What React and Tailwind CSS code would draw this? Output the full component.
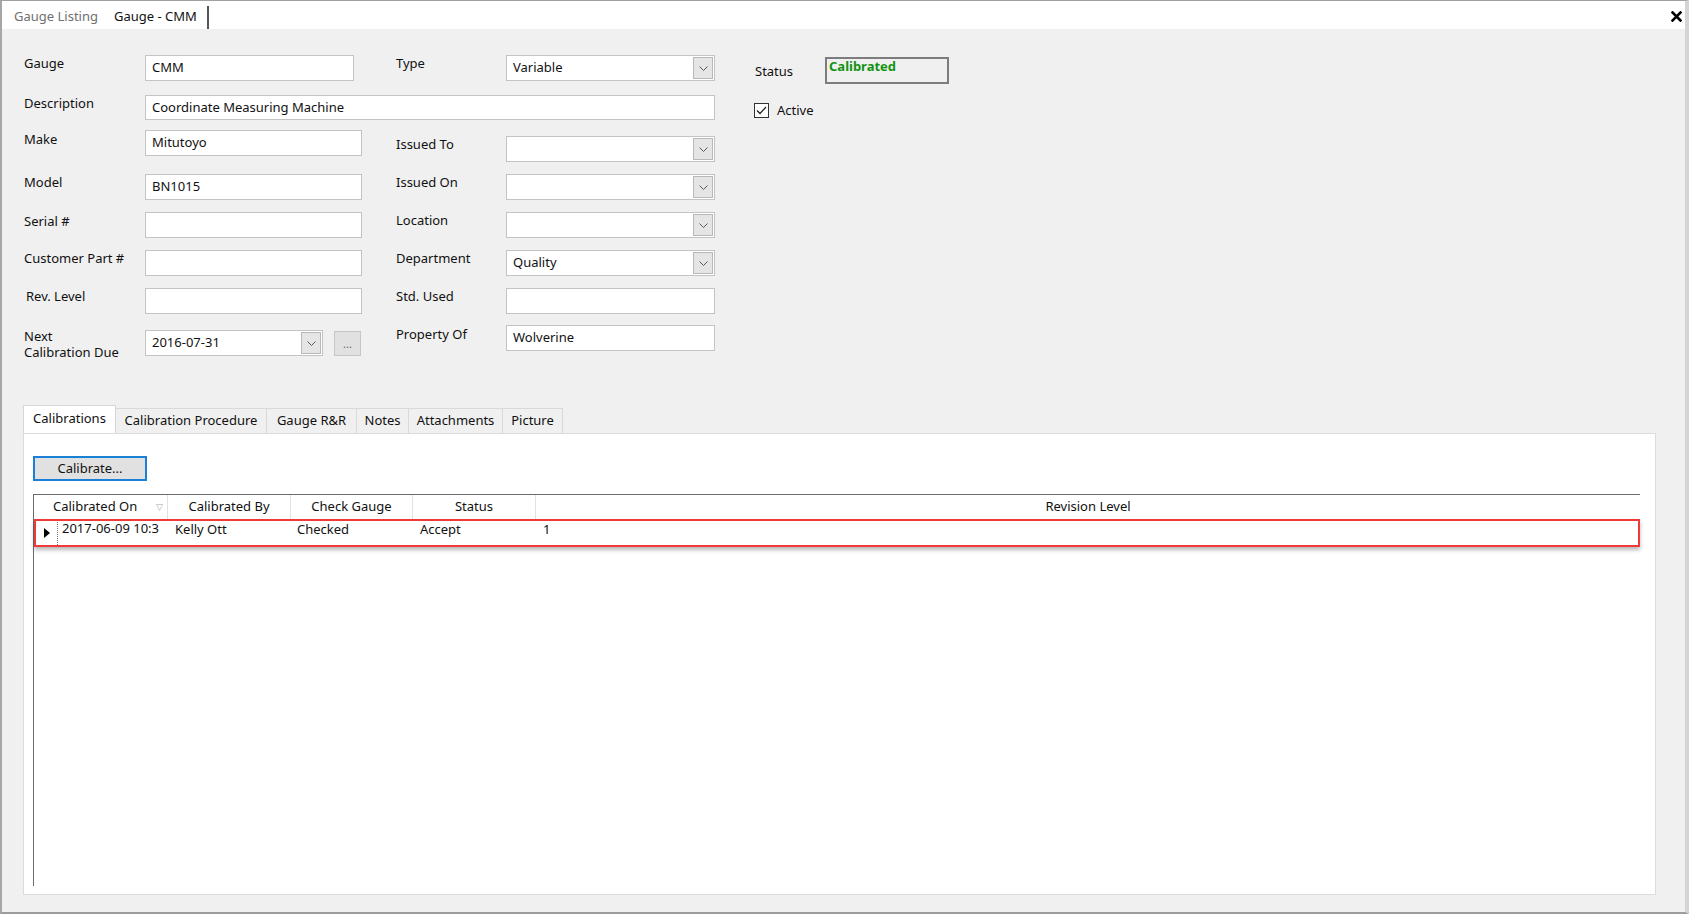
import React from "react";

function Label({ children, className = "" }) {
  return (
    <div className={"text-[13px] leading-[16px] text-[#111] " + className}>
      {children}
    </div>
  );
}

function TextBox({ value, className = "" }) {
  return (
    <div
      className={
        "bg-white border border-[#c4c4c4] flex items-center pl-[6px] text-[13px] text-[#111] " +
        className
      }
    >
      {value}
    </div>
  );
}

function Chevron() {
  return (
    <svg width="9" height="5" viewBox="0 0 9 5">
      <polyline
        points="0.5,0.5 4.5,4.5 8.5,0.5"
        fill="none"
        stroke="#5a5a5a"
        strokeWidth="1"
      />
    </svg>
  );
}

function Combo({ value = "", className = "" }) {
  return (
    <div
      className={
        "bg-white border border-[#c4c4c4] flex items-center pl-[6px] pr-[1px] text-[13px] text-[#111] " +
        className
      }
    >
      <div className="flex-1">{value}</div>
      <div className="w-[20px] h-[22px] bg-[#e5e5e5] border border-[#b8b8b8] flex items-center justify-center">
        <Chevron />
      </div>
    </div>
  );
}

function Tab({ children, active, className = "" }) {
  if (active) {
    return (
      <div
        className={
          "h-[28px] bg-white border border-b-0 border-[#d6d6d6] flex items-center justify-center pb-[2px] text-[13px] text-[#111] " +
          className
        }
      >
        {children}
      </div>
    );
  }
  return (
    <div
      className={
        "h-[25px] bg-[#f0f0f0] border border-b-0 border-l-0 border-[#d9d9d9] flex items-center justify-center text-[13px] text-[#111] " +
        className
      }
    >
      {children}
    </div>
  );
}

export default function App() {
  return (
    <div className="w-[1689px] h-[914px] flex flex-col bg-[#f0f0f0] border-t border-l-2 border-r-4 border-b-2 border-t-[#a0a0a0] border-l-[#a6a6a6] border-r-[#d4d4d4] border-b-[#9c9c9c] font-[family-name:'Segoe_UI','Noto_Sans',sans-serif] select-none">
      {/* document tabs */}
      <div className="h-[28px] bg-white flex items-center text-[13px]">
        <div className="pl-[12px] pt-[3px] w-[110px] text-[#707070]">Gauge Listing</div>
        <div className="pl-[2px] pt-[3px] w-[95px] text-[#111]">Gauge - CMM</div>
        <div className="w-[2px] h-[23px] mt-[5px] self-end bg-[#555]" />
        <div className="flex-1" />
        <div className="pr-[3px] pt-[2px]">
          <svg width="11" height="11" viewBox="0 0 11 11">
            <path d="M1.5 1.5 L9.5 9.5 M9.5 1.5 L1.5 9.5" stroke="#000" strokeWidth="2.6" strokeLinecap="square" />
          </svg>
        </div>
      </div>

      {/* form */}
      <div className="pl-[22px] pt-[26px] flex flex-col">
        <div className="flex items-start">
          <Label className="w-[121px]">Gauge</Label>
          <TextBox value="CMM" className="w-[209px] h-[26px]" />
          <Label className="ml-[42px] w-[110px]">Type</Label>
          <Combo value="Variable" className="w-[209px] h-[26px]" />
          <Label className="ml-[40px] w-[70px] mt-[8px]">Status</Label>
          <div className="mt-[2px] w-[124px] h-[27px] border-2 border-[#7d7d7d] bg-[#f0f0f0] pl-[2px] text-[13px] leading-[15px] font-bold text-[#139313]">
            Calibrated
          </div>
        </div>

        <div className="flex items-start mt-[11px]">
          <Label className="w-[121px]">Description</Label>
          <TextBox value="Coordinate Measuring Machine" className="w-[570px] h-[25px]" />
          <div className="ml-[39px] mt-[8px] flex items-center gap-[8px] leading-[15px]">
            <div className="w-[15px] h-[15px] border border-[#333] bg-white flex items-center justify-center">
              <svg width="11" height="9" viewBox="0 0 11 9">
                <polyline points="1,4.5 4,7.5 10,1" fill="none" stroke="#222" strokeWidth="1.3" />
              </svg>
            </div>
            <span className="text-[13px] text-[#111]">Active</span>
          </div>
        </div>

        <div className="flex items-start mt-[10px]">
          <Label className="w-[121px] mt-[1px]">Make</Label>
          <TextBox value="Mitutoyo" className="w-[217px] h-[26px]" />
          <Label className="ml-[34px] w-[110px] mt-[6px]">Issued To</Label>
          <Combo className="w-[209px] h-[26px] mt-[6px]" />
        </div>

        <div className="flex items-start mt-[12px]">
          <Label className="w-[121px]">Model</Label>
          <TextBox value="BN1015" className="w-[217px] h-[26px]" />
          <Label className="ml-[34px] w-[110px]">Issued On</Label>
          <Combo className="w-[209px] h-[26px]" />
        </div>

        <div className="flex items-start mt-[12px]">
          <Label className="w-[121px] mt-[1px]">Serial #</Label>
          <TextBox className="w-[217px] h-[26px]" />
          <Label className="ml-[34px] w-[110px]">Location</Label>
          <Combo className="w-[209px] h-[26px]" />
        </div>

        <div className="flex items-start mt-[12px]">
          <Label className="w-[121px]">Customer Part #</Label>
          <TextBox className="w-[217px] h-[26px]" />
          <Label className="ml-[34px] w-[110px]">Department</Label>
          <Combo value="Quality" className="w-[209px] h-[26px]" />
        </div>

        <div className="flex items-start mt-[12px]">
          <Label className="w-[121px] pl-[2px]">Rev. Level</Label>
          <TextBox className="w-[217px] h-[26px]" />
          <Label className="ml-[34px] w-[110px]">Std. Used</Label>
          <TextBox className="w-[209px] h-[26px]" />
        </div>

        <div className="flex items-start mt-[11px]">
          <Label className="w-[121px] mt-[3px]">
            Next
            <br />
            Calibration Due
          </Label>
          <Combo value="2016-07-31" className="w-[178px] h-[26px] mt-[5px]" />
          <div className="ml-[11px] mt-[6px] w-[27px] h-[25px] bg-[#e1e1e1] border border-[#c6c6c6] flex items-center justify-center text-[11px] text-[#666] pt-[2px]">
            ...
          </div>
          <Label className="ml-[35px] w-[110px] mt-[1px]">Property Of</Label>
          <TextBox value="Wolverine" className="w-[209px] h-[26px]" />
        </div>
      </div>

      {/* detail tabs */}
      <div className="flex-1 flex flex-col pl-[21px] pr-[29px] pb-[17px] mt-[45px]">
        <div className="flex items-end">
          <Tab active className="w-[93px]">Calibrations</Tab>
          <Tab className="w-[151px]">Calibration Procedure</Tab>
          <Tab className="w-[90px]">Gauge R&amp;R</Tab>
          <Tab className="w-[52px]">Notes</Tab>
          <Tab className="w-[94px]">Attachments</Tab>
          <Tab className="w-[60px]">Picture</Tab>
        </div>
        <div className="flex-1 flex flex-col bg-white border border-[#dcdcdc] pl-[9px] pt-[22px] pr-[15px] pb-[8px]">
          <div className="w-[114px] h-[25px] border-2 border-[#1a7fd6] bg-[#e1e1e1] flex items-center justify-center text-[13px] text-[#111]">
            Calibrate...
          </div>

          <div className="relative flex-1 mt-[13px] border-l border-t border-[#6b6b6b] bg-white text-[13px] text-[#111]">
            <div className="flex h-[24px] items-center">
              <div className="w-[134px] h-full flex items-center pl-[19px] border-r border-[#e2e2e2]">
                <span className="flex-1">Calibrated On</span>
                <span className="text-[9px] text-[#a8a8a8] pr-[4px]">▽</span>
              </div>
              <div className="w-[123px] h-full flex items-center justify-center border-r border-[#e2e2e2]">
                Calibrated By
              </div>
              <div className="w-[122px] h-full flex items-center justify-center border-r border-[#e2e2e2]">
                Check Gauge
              </div>
              <div className="w-[123px] h-full flex items-center justify-center border-r border-[#e2e2e2]">
                Status
              </div>
              <div className="flex-1 h-full flex items-center justify-center">
                Revision Level
              </div>
            </div>
            <div className="flex h-[28px]">
              <div className="w-[23px] flex items-center justify-center pl-[2px]">
                <svg width="6" height="10" viewBox="0 0 6 10">
                  <polygon points="0,0 6,5 0,10" fill="#000" />
                </svg>
              </div>
              <div className="w-[111px] pl-[4px] border-l border-dotted border-[#777]">
                2017-06-09 10:3
              </div>
              <div className="w-[123px] pl-[7px] pt-[1px]">Kelly Ott</div>
              <div className="w-[122px] pl-[6px] pt-[1px]">Checked</div>
              <div className="w-[123px] pl-[7px] pt-[1px]">Accept</div>
              <div className="flex-1 pl-[7px] pt-[1px]">1</div>
            </div>
            <div className="absolute left-0 right-0 top-[24px] h-[28px] border-2 border-[#ef3a3a] shadow-[0_3px_4px_rgba(0,0,0,0.28)]" />
          </div>
        </div>
      </div>
    </div>
  );
}
